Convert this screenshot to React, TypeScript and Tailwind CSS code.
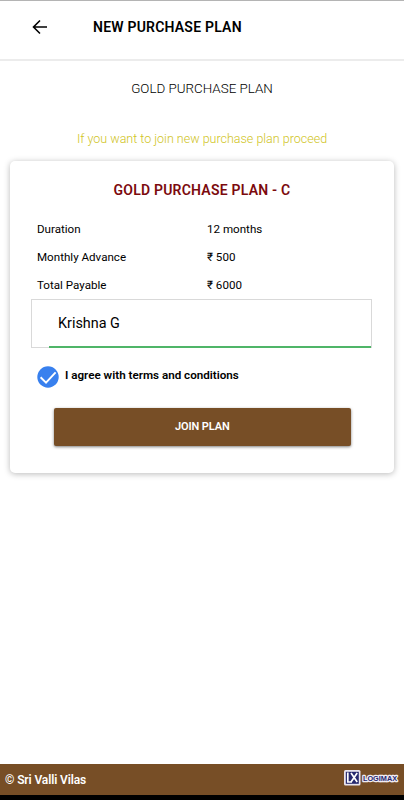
const details = [
  { label: 'Duration', value: '12 months' },
  { label: 'Monthly Advance', value: '₹ 500' },
  { label: 'Total Payable', value: '₹ 6000' },
];

function Header() {
  return (
    <header className="flex h-[61px] items-center border-t border-b-2 border-t-[#b4b4b4] border-b-[#ececec] pb-[6px] pl-8">
      <svg width="16" height="16" viewBox="0 0 16 16" fill="none" stroke="#000" strokeWidth="1.6">
        <path d="M15 8H2M8 1.5L1.5 8L8 14.5" />
      </svg>
      <h1 className="ml-[45px] text-[14px] leading-5 font-semibold tracking-[0.22px] whitespace-nowrap text-black">
        NEW PURCHASE PLAN
      </h1>
    </header>
  );
}

function Logo() {
  return (
    <svg width="56" height="18" viewBox="0 0 56 18">
      <rect x="1" y="1" width="16.5" height="15.5" rx="1.5" fill="#e9e4ee" />
      <rect x="2.8" y="2.8" width="13" height="12" fill="#26286e" />
      <path d="M4.8 3.5V13H9M8 4L14.2 13M14.2 4L8 13" fill="none" stroke="#fff" strokeWidth="1.7" />
      <text
        x="20"
        y="11.5"
        textLength="34"
        lengthAdjust="spacingAndGlyphs"
        className="font-['Liberation_Sans',sans-serif] text-[7.5px] font-bold"
        fill="#26286e"
        stroke="#f1ecf2"
        strokeWidth="2.6"
        strokeLinejoin="round"
        paintOrder="stroke"
      >
        LOGIMAX
      </text>
    </svg>
  );
}

export default function App() {
  return (
    <div className="flex h-[800px] w-[404px] flex-col overflow-hidden bg-white font-[Roboto,'Noto_Sans',sans-serif] text-black">
      <Header />
      <main className="flex flex-1 flex-col">
        <h2 className="mt-[18px] text-center text-[13.4px] leading-5 font-light">GOLD PURCHASE PLAN</h2>
        <p className="mt-[30px] text-center text-[12.5px] leading-5 font-light text-[#d0c41c]">
          If you want to join new purchase plan proceed
        </p>

        <section className="mx-[10px] mt-3 h-[312px] rounded-[5px] bg-white pt-[19px] shadow-[0_1px_6px_rgba(0,0,0,0.28)]">
          <h3 className="text-center text-[14px] leading-5 font-semibold tracking-[0.22px] text-[#7c0a0e]">
            GOLD PURCHASE PLAN - C
          </h3>
          <dl className="mt-4 pl-[27px] text-[11.6px]">
            {details.map((item) => (
              <div key={item.label} className="flex h-7 items-center">
                <dt className="w-[170px]">{item.label}</dt>
                <dd>{item.value}</dd>
              </div>
            ))}
          </dl>

          <div className="-mt-px mr-[22px] ml-[21px] flex h-[49px] border border-[#d9d9d9] pl-[17px]">
            <div className="-mb-px flex flex-1 items-center border-b-2 border-[#4fb568] pt-px pl-[9px] text-[14.4px]">
              Krishna G
            </div>
          </div>

          <div className="mt-[18px] flex items-start pl-[26.5px]">
            <svg width="22" height="22" viewBox="0 0 22 22">
              <circle cx="11" cy="11" r="10.7" fill="#3880ee" />
              <path d="M3.6 11.3L9 16.6L18.6 6.3" fill="none" stroke="#fff" strokeWidth="1.9" />
            </svg>
            <span className="ml-[6.5px] text-[11.65px] leading-[18px] font-semibold">
              I agree with terms and conditions
            </span>
          </div>

          <button className="mt-[19.5px] ml-[43.5px] flex h-[38px] w-[297.5px] items-center justify-center rounded-[2px] bg-[#774e26] pt-px text-[11px] font-semibold tracking-[-0.1px] text-white shadow-[0_1px_3px_rgba(0,0,0,0.5)]">
            JOIN PLAN
          </button>
        </section>
      </main>
      <footer className="flex h-9 items-center justify-between border-b-[5px] border-black bg-[#774e26] pr-[5px] pl-[5px]">
        <span className="text-[12px] font-semibold tracking-[-0.12px] text-white">© Sri Valli Vilas</span>
        <div className="-mt-[3px]">
          <Logo />
        </div>
      </footer>
    </div>
  );
}
